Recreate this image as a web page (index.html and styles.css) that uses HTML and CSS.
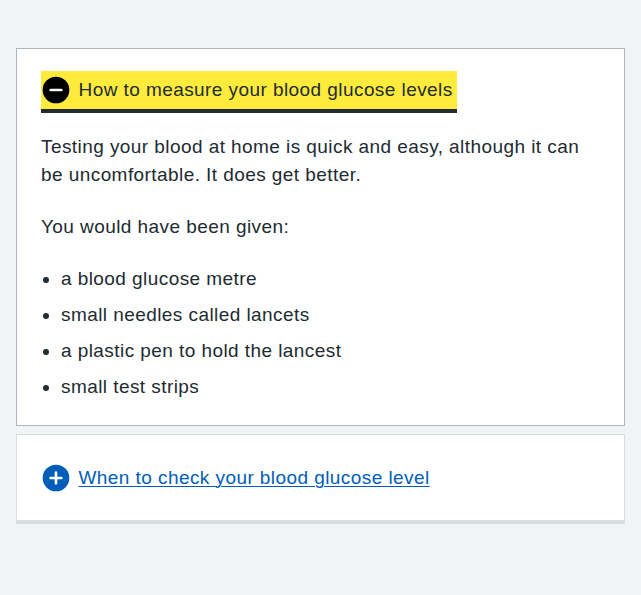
FILE: index.html
```html
<!DOCTYPE html>
<html lang="en">
<head>
<meta charset="utf-8">
<title>Expander</title>
<link rel="stylesheet" href="styles.css">
</head>
<body>
<main class="page">
  <details class="expander expander--open" open>
    <summary class="summary">
      <span class="summary-text summary-text--focus">
        <svg class="icon" viewBox="0 0 24 24" width="32" height="32" aria-hidden="true"><circle cx="12" cy="12" r="10" fill="#000"/><path d="M8 12h8" fill="none" stroke="#fff" stroke-width="2" stroke-linecap="round"/></svg>
        <span class="summary-label">How to measure your blood glucose levels</span>
      </span>
    </summary>
    <div class="content">
      <p>Testing your blood at home is quick and easy, although it can be uncomfortable. It does get better.</p>
      <p>You would have been given:</p>
      <ul class="list">
        <li>a blood glucose metre</li>
        <li>small needles called lancets</li>
        <li>a plastic pen to hold the lancest</li>
        <li>small test strips</li>
      </ul>
    </div>
  </details>
  <details class="expander expander--closed">
    <summary class="summary">
      <span class="summary-text">
        <svg class="icon" viewBox="0 0 24 24" width="32" height="32" aria-hidden="true"><circle cx="12" cy="12" r="10" fill="#005eb8"/><path d="M12 8v8M8 12h8" fill="none" stroke="#fff" stroke-width="2" stroke-linecap="round"/></svg>
        <span class="summary-label summary-label--link">When to check your blood glucose level</span>
      </span>
    </summary>
  </details>
</main>
</body>
</html>
```
FILE: styles.css
```css
html, body {
  margin: 0;
  padding: 0;
  background: #f0f4f5;
}
body {
  font-family: "Liberation Sans", Arial, sans-serif;
  font-size: 19px;
  line-height: 28px;
  letter-spacing: 0.43px;
  color: #212b32;
}
.page {
  padding: 48px 16px;
  display: flex;
  flex-direction: column;
  gap: 8px;
}
.expander {
  background: #fff;
  border: 1px solid #d8dde0;
  border-bottom: 4px solid #d8dde0;
  padding: 24px 24px 23px;
}
.expander--open {
  border: 1px solid #aeb7bd;
  padding: 22px 24px 24px;
}
.summary {
  list-style: none;
  display: flex;
  cursor: pointer;
}
.summary::-webkit-details-marker { display: none; }
.summary-text {
  display: flex;
  align-items: center;
  padding: 3px 4px 3px 0;
  gap: 7px;
}
.summary-text--focus {
  background: #ffeb3b;
  box-shadow: 0 4px 0 #212b32;
}
.icon {
  display: block;
  flex: none;
  margin-left: -1.5px;
}
.summary-label {
  line-height: 28px;
}
.summary-label--link {
  color: #005eb8;
  text-decoration: underline;
  text-underline-offset: 2px;
  text-decoration-thickness: 1px;
}
.content {
  padding-top: 24px;
}
.content p {
  margin: 0 0 24px;
}
.list {
  margin: 0;
  padding-left: 20px;
  list-style: disc;
}
.list li {
  margin-bottom: 8px;
}
.list li:last-child {
  margin-bottom: 0;
}
```
